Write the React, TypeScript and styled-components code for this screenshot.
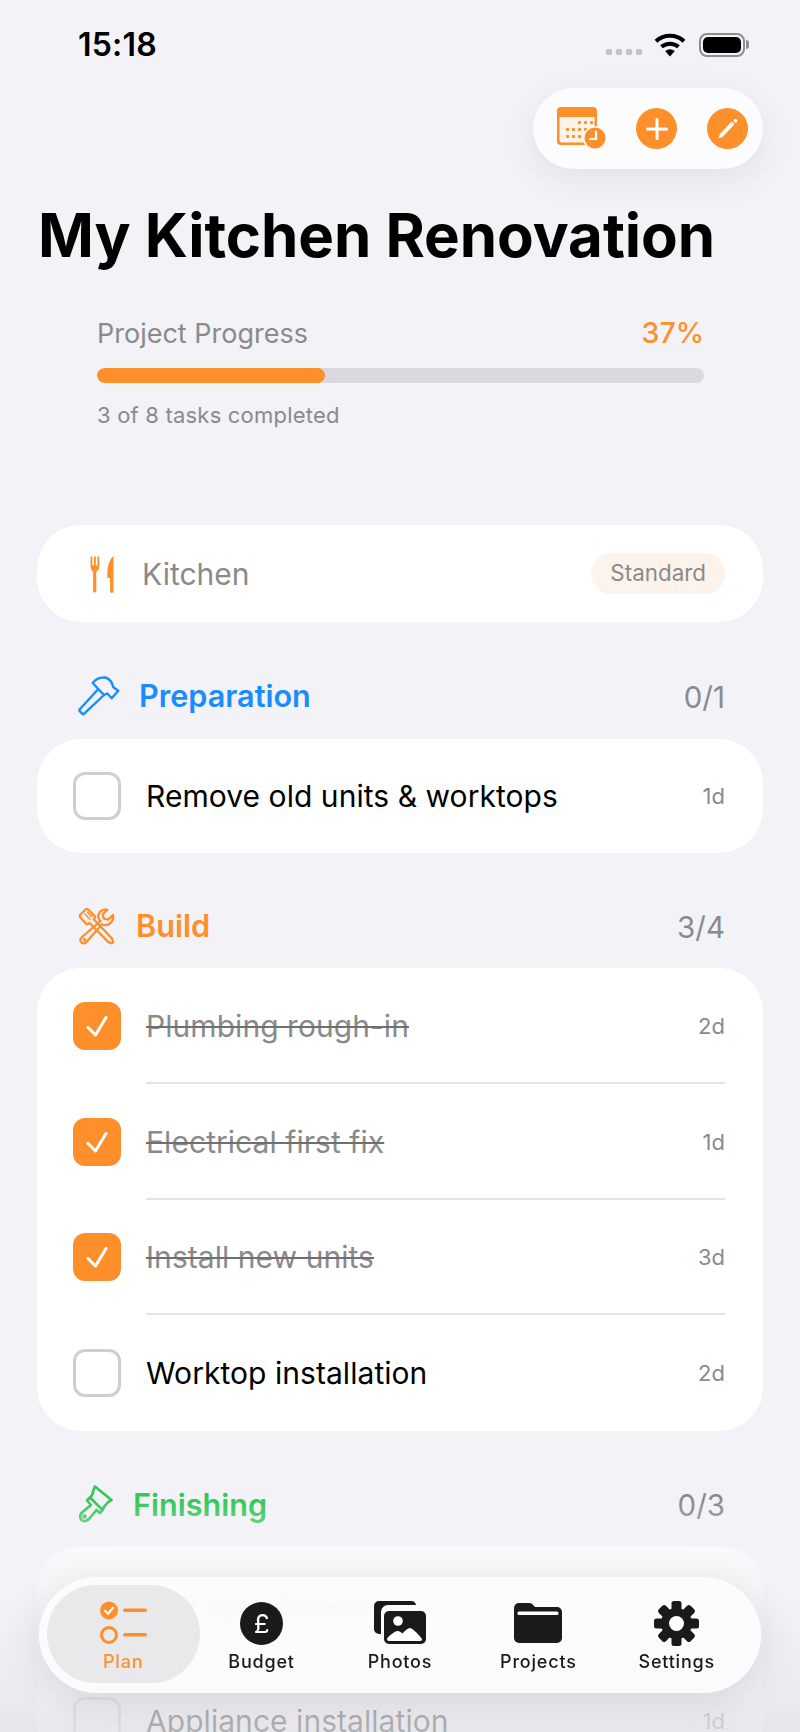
import React from 'react';
import styled, { createGlobalStyle } from 'styled-components';

const orange = '#ff8f2b';
const grey = '#8a8a8e';
const ink = '#1a1a1c';

const GlobalStyle = createGlobalStyle`
    html, body {
        margin: 0;
        padding: 0;
        height: 1732px;
        overflow: hidden;
        background: #f2f2f7;
        font-family: Inter, "Liberation Sans", sans-serif;
    }
`;

const Page = styled.div`
    position: relative;
    width: 800px;
    height: 1732px;
    overflow: hidden;
    box-sizing: border-box;
    padding: 0 37px;
    background: #f2f2f7;
`;

const StatusBar = styled.div`
    display: flex;
    justify-content: space-between;
    align-items: center;
    height: 88px;
    margin: 0 -37px;
    padding: 0 55px 0 78px;
    box-sizing: border-box;
`;

const Clock = styled.div`
    font-size: 32px;
    font-weight: 600;
    color: #000;
    letter-spacing: 0.2px;
`;

const StatusIcons = styled.div`
    display: flex;
    align-items: center;
    margin-top: 2px;
`;

const SignalDots = styled.div`
    display: flex;
    gap: 4px;
    margin: 13px 12px 0 0;
`;

const SignalDot = styled.span`
    width: 6px;
    height: 6px;
    border-radius: 1.5px;
    background: #c4c4c8;
`;

const Battery = styled.div`
    position: relative;
    width: 46px;
    height: 24px;
    margin-left: 13px;
    box-sizing: border-box;
    border: 2px solid #8e8e90;
    border-radius: 8px;
    padding: 2px;

    &::before {
        content: '';
        display: block;
        height: 100%;
        border-radius: 5px;
        background: #000;
    }

    &::after {
        content: '';
        position: absolute;
        top: 5px;
        right: -6px;
        width: 3px;
        height: 9px;
        border-radius: 0 3px 3px 0;
        background: #8e8e90;
    }
`;

const ActionRow = styled.div`
    display: flex;
    justify-content: flex-end;
`;

const ActionPill = styled.div`
    display: flex;
    align-items: center;
    width: 230px;
    height: 81px;
    box-sizing: border-box;
    padding: 0 14px 0 24px;
    border-radius: 41px;
    background: #fcfcfe;
    box-shadow: 0 10px 36px rgba(0, 0, 0, 0.07);
`;

const CalendarButton = styled.div`
    display: flex;
    width: 52px;
    margin: 6px 27px 0 0;
`;

const RoundButton = styled.div<{ $last?: boolean }>`
    display: flex;
    align-items: center;
    justify-content: center;
    width: 41px;
    height: 41px;
    margin-left: ${(p) => (p.$last ? '30px' : '0')};
    border-radius: 50%;
    background: ${orange};
`;

const Title = styled.h1`
    margin: 30px 0 0 1px;
    font-size: 60px;
    line-height: 72px;
    font-weight: 700;
    letter-spacing: -0.05px;
    color: #000;
    white-space: nowrap;
`;

const Progress = styled.section`
    margin: 46px 59px 0 60px;
`;

const ProgressHead = styled.div`
    display: flex;
    justify-content: space-between;
    align-items: baseline;
    height: 33px;
    font-size: 27px;
    line-height: 32px;
    color: ${grey};
`;

const ProgressValue = styled.span`
    color: ${orange};
    font-size: 28.5px;
    font-weight: 500;
`;

const Track = styled.div`
    height: 15px;
    margin-top: 18px;
    border-radius: 8px;
    background: #d9d9de;
    overflow: hidden;
`;

const Fill = styled.div`
    height: 100%;
    border-radius: 8px;
    background: ${orange};
`;

const ProgressNote = styled.div`
    margin-top: 18px;
    font-size: 22px;
    line-height: 28px;
    letter-spacing: 0.2px;
    color: ${grey};
`;

const RoomCard = styled.div`
    display: flex;
    align-items: center;
    height: 97px;
    margin-top: 96px;
    padding: 0 38px 0 53px;
    border-radius: 44px;
    background: #fff;
`;

const RoomName = styled.span`
    flex: 1;
    margin-left: 28px;
    font-size: 30px;
    color: ${grey};
`;

const Badge = styled.span`
    padding: 0 19px;
    height: 41px;
    line-height: 40px;
    border-radius: 21px;
    background: #fdf3ea;
    font-size: 22.4px;
    color: ${grey};
`;

const SectionHead = styled.div<{ $gap: number; $height: number }>`
    display: flex;
    align-items: center;
    gap: ${(p) => p.$gap}px;
    height: ${(p) => p.$height}px;
    padding: 33px 38px 3px 41px;
`;

const SectionName = styled.span<{ $color: string }>`
    flex: 1;
    font-size: 30.6px;
    font-weight: 560;
    color: ${(p) => p.$color};
`;

const SectionCount = styled.span`
    margin-top: 2px;
    font-size: 29.5px;
    color: ${grey};
`;

const Card = styled.div`
    border-radius: 44px;
    background: #fff;
`;

const Row = styled.div<{ $short?: boolean }>`
    display: flex;
    align-items: center;
    height: ${(p) => (p.$short ? 114 : 115.75)}px;
    padding: 0 38px 0 36px;
`;

const Box = styled.div<{ $done?: boolean }>`
    display: flex;
    align-items: center;
    justify-content: center;
    flex: none;
    width: 48px;
    height: 48px;
    box-sizing: border-box;
    border-radius: 12px;
    border: ${(p) => (p.$done ? 'none' : '3px solid #cfcfd1')};
    background: ${(p) => (p.$done ? orange : 'transparent')};
`;

const RowBody = styled.div<{ $line?: boolean }>`
    display: flex;
    align-items: center;
    justify-content: space-between;
    flex: 1;
    align-self: stretch;
    margin-left: 25px;
    padding-top: 2px;
    border-bottom: ${(p) => (p.$line ? '2px solid #e3e3e6' : '2px solid transparent')};
`;

const TaskName = styled.span<{ $done?: boolean }>`
    font-size: 30px;
    letter-spacing: 0.05px;
    color: ${(p) => (p.$done ? grey : '#000')};
    text-decoration: ${(p) => (p.$done ? 'line-through' : 'none')};
    text-decoration-color: #6f6f72;
    text-decoration-thickness: 2px;
`;

const Duration = styled.span`
    font-size: 22px;
    color: ${grey};
`;

const Fade = styled.div`
    position: absolute;
    left: 0;
    right: 0;
    top: 1500px;
    bottom: 0;
    background: linear-gradient(
        to bottom,
        rgba(238, 238, 243, 0) 0,
        rgba(245, 245, 249, 0.72) 70px,
        rgba(232, 232, 237, 0.72) 190px,
        rgba(226, 226, 231, 0.78) 232px
    );
`;

const TabBar = styled.nav`
    position: absolute;
    left: 39px;
    top: 1577px;
    display: flex;
    width: 722px;
    height: 116px;
    box-sizing: border-box;
    padding-left: 15px;
    border-radius: 58px;
    background: rgba(252, 252, 254, 0.93);
    backdrop-filter: blur(2.5px);
    box-shadow: 0 8px 40px rgba(0, 0, 0, 0.1);
`;

const Tab = styled.div<{ $active?: boolean }>`
    position: relative;
    display: flex;
    flex-direction: column;
    align-items: center;
    width: 138.4px;
    padding-top: 24px;
    box-sizing: border-box;
    font-size: 18px;
    font-weight: 450;
    letter-spacing: 0.8px;
    color: ${(p) => (p.$active ? orange : ink)};

    &::before {
        content: '';
        display: ${(p) => (p.$active ? 'block' : 'none')};
        position: absolute;
        left: -7px;
        right: -8px;
        top: 8px;
        bottom: 10px;
        border-radius: 49px;
        background: #e9e9ec;
    }
`;

const TabIcon = styled.div`
    position: relative;
    display: flex;
    align-items: center;
    justify-content: center;
    height: 44px;
`;

const TabLabel = styled.span`
    position: relative;
    margin-top: 5px;
    line-height: 24px;
`;

const CalendarIcon = () => (
    <svg width="52" height="50" viewBox="0 0 52 50">
        <rect x="0" y="0" width="40" height="38" rx="4" fill={orange} />
        <path d="M2.5 10h35v23a2.5 2.5 0 0 1-2.5 2.5H5A2.5 2.5 0 0 1 2.5 33z" fill="#fdf3ea" />
        {[0, 1, 2].map((r) =>
            [0, 1, 2, 3, 4].map((c) =>
                r === 0 && c < 2 ? null : (
                    <rect key={`${r}${c}`} x={9 + c * 6} y={14 + r * 7} width="3" height="3" rx="0.8" fill={orange} />
                )
            )
        )}
        <circle cx="38" cy="31" r="12" fill="#fcfcfe" />
        <circle cx="38" cy="31" r="10.5" fill={orange} />
        <path d="M39 24.5V32h-6" stroke="#fff" strokeWidth="2.2" fill="none" strokeLinecap="round" strokeLinejoin="round" />
    </svg>
);

const WifiIcon = () => (
    <svg width="32" height="24" viewBox="0 0 32 24">
        <path d="M2 8.2C10 1 22 1 30 8.2" stroke="#000" strokeWidth="4" fill="none" />
        <path d="M7.5 13.8C12.5 9.6 19.5 9.6 24.5 13.8" stroke="#000" strokeWidth="4" fill="none" />
        <path d="M11.2 18 Q16 14.4 20.8 18 L16 23.5z" fill="#000" />
    </svg>
);

const ForkKnife = () => (
    <svg width="24" height="38" viewBox="0 0 24 38" fill={orange}>
        <path d="M0.5 1.5h1.8v9h1.6v-9h1.9v9h1.6v-9h1.9V11c0 3-1.4 4.6-3 5.4V36a1.6 1.6 0 0 1-3.2 0V16.4C1.9 15.6.5 14 .5 11z" />
        <path d="M23.5 1v35.2a1.7 1.7 0 0 1-3.4 0V23h-2.6c-.6-7 .2-17 6-22z" />
    </svg>
);

const HammerIcon = () => (
    <svg width="42" height="42" viewBox="0 0 42 42" fill="none" stroke="#1a8cff" strokeWidth="2.4" strokeLinejoin="round">
        <path d="M20.3 14 1.8 34.2q-.8 1 0 2l2.4 2.5q1 1 2 0L26 20" />
        <path d="M20.3 14 14.7 8Q19 2 27 2.5 33.5 4 35.3 12.3L40.3 15.7 33.7 23.3 29.3 18.5 26 20z" />
    </svg>
);

const ToolsIcon = () => (
    <svg width="38" height="38" viewBox="0 0 38 38" fill="none" stroke={orange} strokeWidth="2.3" strokeLinejoin="round" strokeLinecap="round">
        <path d="M2.5 7.5 7.5 2.5c.8-.8 1.8-.8 2.6 0l6.4 6.4c.6.6.6 1.4.2 2l-1 1.4L34 31.5l1.2 3.6-1.2 1.2-3.6-1.2L11.6 16l-1.6 1c-.7.4-1.5.3-2-.2L2.5 10.6c-.9-.9-.9-2.2 0-3.1z" />
        <path d="M6.8 7 12 12.2M9.6 5.4 13.8 9.6" strokeWidth="1.6" />
        <path d="M22.5 14.2 4 30c-2.4 2.1-1.8 4.2-.7 5.3 1.2 1.2 3.4 1.5 5-.4L24 17.5c3.6 1.2 7.4.2 9.6-2.6 1.7-2.2 2-4.6 1.3-6.9l-4.7 4.6-4.5-1-1-4.5L29.4 2.8C27 2 24.2 2.6 22.4 4.6c-2.3 2.6-2.6 6.1-.9 8.6z" />
        <circle cx="6.4" cy="32.6" r="1" strokeWidth="1.6" />
    </svg>
);

const BrushIcon = () => (
    <svg width="35" height="38" viewBox="0 0 35 38" fill="none" stroke="#34c759" strokeWidth="2.6" strokeLinejoin="round" strokeLinecap="round">
        <path d="M17 1.5 33.5 15Q30 16.5 28.5 19 26 21 24.5 25L12 12.5Q15 10 15 6.5z" />
        <path d="M12 12.5 9 15.5 13 20 4 27.5Q1.5 30 2.5 33.5 4 36.5 7.5 36 9.5 35.5 11 34L18.5 25 22 28 24.5 25" />
        <circle cx="6.5" cy="31.5" r="1.3" strokeWidth="1.8" />
    </svg>
);

const PlanIcon = () => (
    <svg width="50" height="44" viewBox="0 0 50 44">
        <circle cx="11" cy="9.5" r="9" fill={orange} />
        <path d="M7 9.8l3 3 5-6" stroke="#fff" strokeWidth="2.2" fill="none" strokeLinecap="round" strokeLinejoin="round" />
        <rect x="25" y="7.5" width="24" height="3.5" rx="1.75" fill={orange} />
        <circle cx="11" cy="34" r="7.5" fill="none" stroke={orange} strokeWidth="3" />
        <rect x="25" y="32" width="24" height="3.5" rx="1.75" fill={orange} />
    </svg>
);

const PoundIcon = styled.div`
    display: flex;
    align-items: center;
    justify-content: center;
    width: 43px;
    height: 43px;
    border-radius: 50%;
    background: ${ink};
    color: #fff;
    font-size: 26px;
    font-weight: 400;
    letter-spacing: 0;
`;

const PhotosIcon = () => (
    <svg width="54" height="44" viewBox="0 0 54 44">
        <path d="M6 0h32a5 5 0 0 1 5 4H15a7 7 0 0 0-7 7v22H6a5 5 0 0 1-5-5V5a5 5 0 0 1 5-5z" fill={ink} />
        <rect x="11" y="10" width="42" height="33" rx="5" fill={ink} />
        <circle cx="25" cy="20" r="4.8" fill="#fff" />
        <path d="M14 38c0 1 .8 2 2 2h31c1.5 0 2.2-1 2-2-.5-1.2-9-11-12-11-2.5 0-6 4-7.5 5.5-1-1-3-2.5-5-2.5-3 0-10.5 6.500-10.500 8z" fill="#fff" />
    </svg>
);

const FolderIcon = () => (
    <svg width="48" height="40" viewBox="0 0 48 40">
        <path d="M5 0h10c2.5 0 3.5 1 5 3l1 1h22a5 5 0 0 1 5 5v26a5 5 0 0 1-5 5H5a5 5 0 0 1-5-5V5a5 5 0 0 1 5-5z" fill={ink} />
        <rect x="3.5" y="8.5" width="41" height="3.5" rx="1.5" fill="#fff" />
    </svg>
);

const GearIcon = () => (
    <svg width="45" height="45" viewBox="0 0 45 45">
        {[0, 45, 90, 135, 180, 225, 270, 315].map((a) => (
            <rect key={a} x="17.5" y="0" width="10" height="12" rx="2.5" fill={ink} transform={`rotate(${a} 22.5 22.5)`} />
        ))}
        <circle cx="22.5" cy="22.5" r="15.5" fill={ink} />
        <circle cx="22.5" cy="22.5" r="7.5" fill="#fff" />
    </svg>
);

type Task = { name: string; days: string; done?: boolean };

const buildTasks: Task[] = [
    { name: 'Plumbing rough-in', days: '2d', done: true },
    { name: 'Electrical first fix', days: '1d', done: true },
    { name: 'Install new units', days: '3d', done: true },
    { name: 'Worktop installation', days: '2d' },
];

const finishTasks: Task[] = [
    { name: 'Tile splashback', days: '1d' },
    { name: 'Appliance installation', days: '1d' },
];

const TaskRow = ({ task, line, short }: { task: Task; line?: boolean; short?: boolean }) => (
    <Row $short={short}>
        <Box $done={task.done}>
            {task.done && (
                <svg width="22" height="22" viewBox="0 0 22 22">
                    <path d="M2 12.5 9.5 20 20 2.5" stroke="#fff" strokeWidth="3" fill="none" strokeLinecap="round" strokeLinejoin="round" />
                </svg>
            )}
        </Box>
        <RowBody $line={line}>
            <TaskName $done={task.done}>{task.name}</TaskName>
            <Duration>{task.days}</Duration>
        </RowBody>
    </Row>
);

const App = () => {
    return (
        <Page>
            <GlobalStyle />
            <StatusBar>
                <Clock>15:18</Clock>
                <StatusIcons>
                    <SignalDots>
                        <SignalDot />
                        <SignalDot />
                        <SignalDot />
                        <SignalDot />
                    </SignalDots>
                    <WifiIcon />
                    <Battery />
                </StatusIcons>
            </StatusBar>

            <ActionRow>
                <ActionPill>
                    <CalendarButton>
                        <CalendarIcon />
                    </CalendarButton>
                    <RoundButton>
                        <svg width="22" height="22" viewBox="0 0 22 22">
                            <path d="M11 1.5v19M1.5 11h19" stroke="#fff" strokeWidth="3" strokeLinecap="round" />
                        </svg>
                    </RoundButton>
                    <RoundButton $last>
                        <svg width="24" height="24" viewBox="0 0 24 24" fill="#fff">
                            <path d="M2.5 21.5 4 17 15.5 4.5 18.5 7.3 6.800 19.800z" />
                            <circle cx="19.5" cy="3.8" r="1.9" />
                        </svg>
                    </RoundButton>
                </ActionPill>
            </ActionRow>

            <Title>My Kitchen Renovation</Title>

            <Progress>
                <ProgressHead>
                    <span>Project Progress</span>
                    <ProgressValue>37%</ProgressValue>
                </ProgressHead>
                <Track>
                    <Fill style={{ width: `${(228 / 607) * 100}%` }} />
                </Track>
                <ProgressNote>3 of 8 tasks completed</ProgressNote>
            </Progress>

            <RoomCard>
                <ForkKnife />
                <RoomName>Kitchen</RoomName>
                <Badge>Standard</Badge>
            </RoomCard>

            <SectionHead $gap={19} $height={81}>
                <HammerIcon />
                <SectionName $color="#1a8cff">Preparation</SectionName>
                <SectionCount>0/1</SectionCount>
            </SectionHead>
            <Card>
                <TaskRow task={{ name: 'Remove old units & worktops', days: '1d' }} short />
            </Card>

            <SectionHead $gap={20} $height={79}>
                <ToolsIcon />
                <SectionName $color={orange}>Build</SectionName>
                <SectionCount>3/4</SectionCount>
            </SectionHead>
            <Card>
                {buildTasks.map((task, i) => (
                    <TaskRow key={task.name} task={task} line={i < buildTasks.length - 1} />
                ))}
            </Card>

            <SectionHead $gap={20} $height={80}>
                <BrushIcon />
                <SectionName $color="#34c759">Finishing</SectionName>
                <SectionCount>0/3</SectionCount>
            </SectionHead>
            <Card>
                {finishTasks.map((task) => (
                    <TaskRow key={task.name} task={task} />
                ))}
            </Card>

            <Fade />

            <TabBar>
                <Tab $active>
                    <TabIcon>
                        <PlanIcon />
                    </TabIcon>
                    <TabLabel>Plan</TabLabel>
                </Tab>
                <Tab>
                    <TabIcon>
                        <PoundIcon>£</PoundIcon>
                    </TabIcon>
                    <TabLabel>Budget</TabLabel>
                </Tab>
                <Tab>
                    <TabIcon>
                        <PhotosIcon />
                    </TabIcon>
                    <TabLabel>Photos</TabLabel>
                </Tab>
                <Tab>
                    <TabIcon>
                        <FolderIcon />
                    </TabIcon>
                    <TabLabel>Projects</TabLabel>
                </Tab>
                <Tab>
                    <TabIcon>
                        <GearIcon />
                    </TabIcon>
                    <TabLabel>Settings</TabLabel>
                </Tab>
            </TabBar>
        </Page>
    );
};

export default App;
